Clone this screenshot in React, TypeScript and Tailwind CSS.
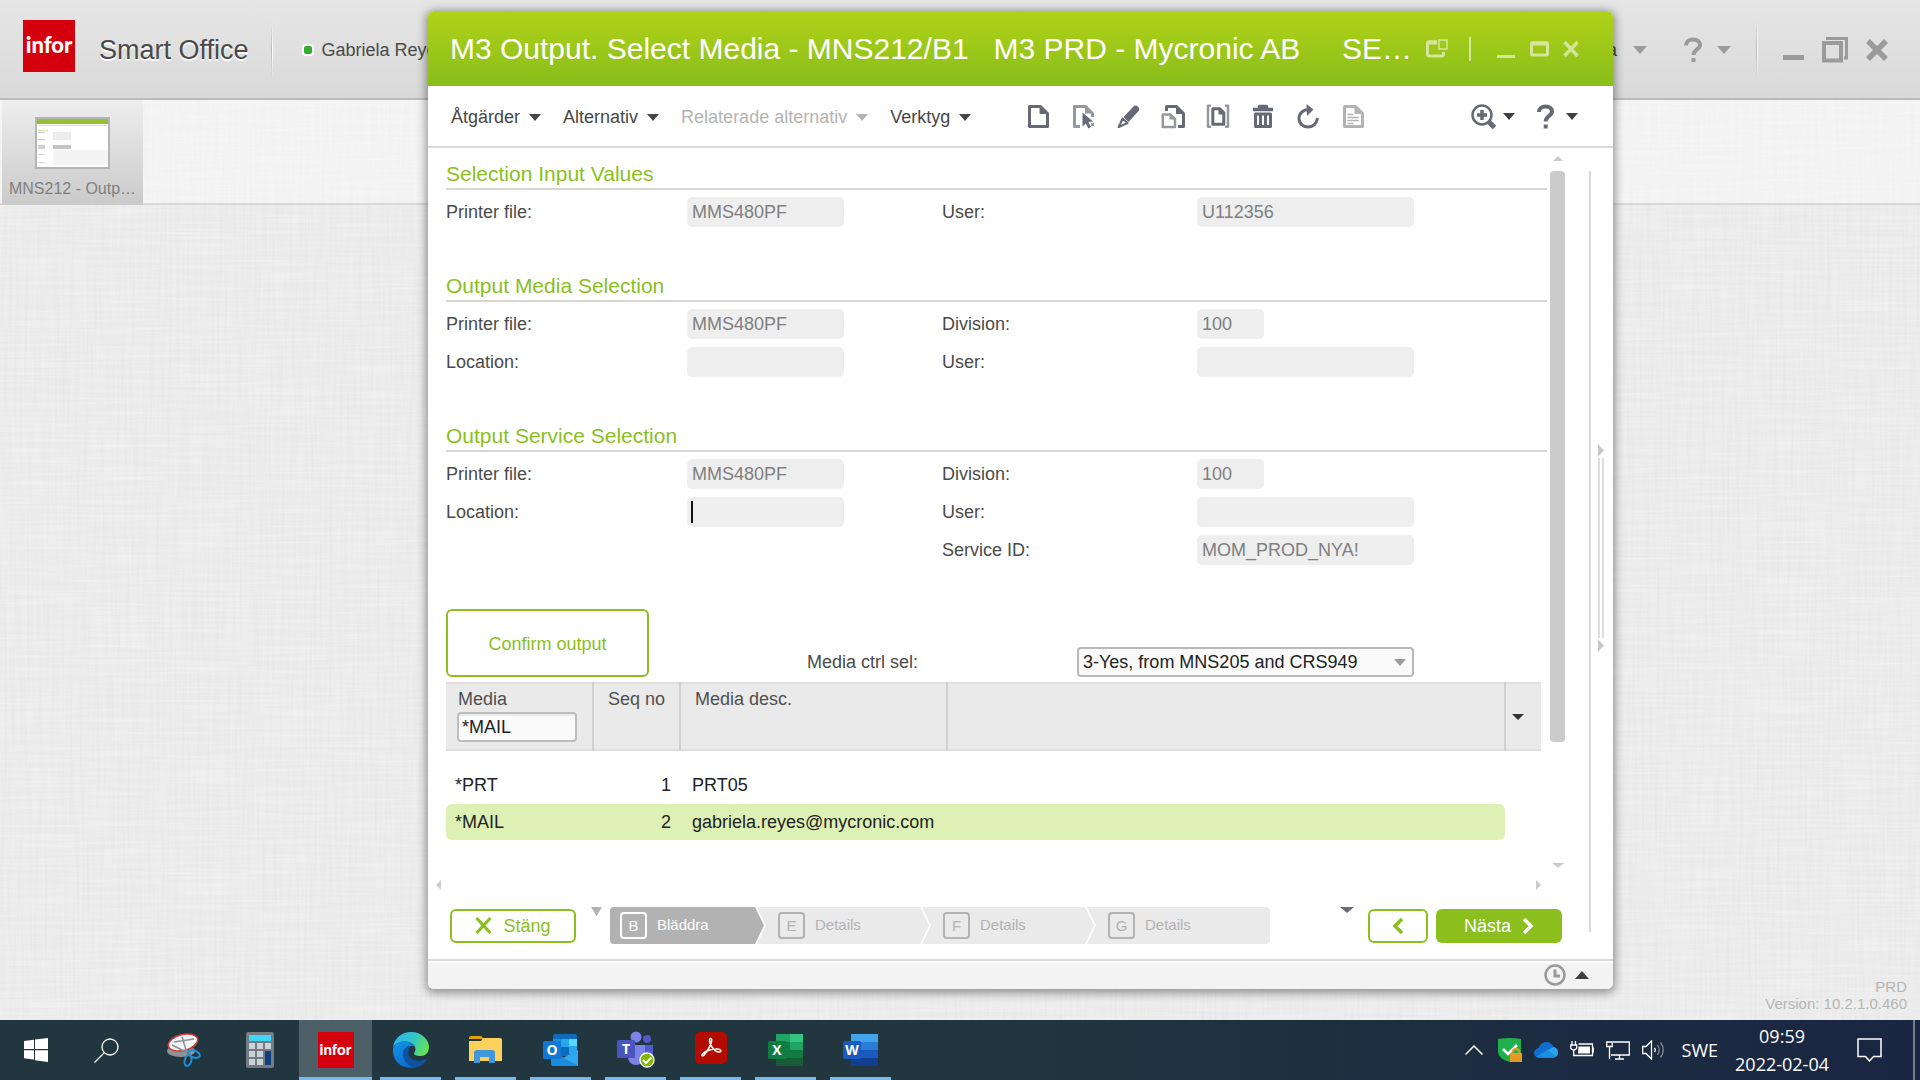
import type { ReactNode } from "react";

const toolbarMenus = [
  { label: "Åtgärder", disabled: false },
  { label: "Alternativ", disabled: false },
  { label: "Relaterade alternativ", disabled: true },
  { label: "Verktyg", disabled: false },
];

const steps = [
  { key: "B", label: "Bläddra" },
  { key: "E", label: "Details" },
  { key: "F", label: "Details" },
  { key: "G", label: "Details" },
];

const mediaRows = [
  { media: "*PRT", seq: 1, desc: "PRT05", selected: false },
  { media: "*MAIL", seq: 2, desc: "gabriela.reyes@mycronic.com", selected: true },
];

const Triangle = ({ dir = "down", className }: { dir?: "down" | "up" | "left" | "right"; className: string }) => {
  const points = {
    down: "0,0 100,0 50,100",
    up: "0,100 100,100 50,0",
    left: "100,0 100,100 0,50",
    right: "0,0 0,100 100,50",
  };
  return (
    <svg viewBox="0 0 100 100" preserveAspectRatio="none" className={`shrink-0 fill-current ${className}`}>
      <polygon points={points[dir]} />
    </svg>
  );
};

// Woven desktop background
const Linen = () => (
  <svg className="absolute inset-0 h-full w-full" aria-hidden="true">
    <filter id="warp" x="0" y="0" width="100%" height="100%">
      <feTurbulence type="fractalNoise" baseFrequency="0.4 0.012" numOctaves="2" seed="4" />
      <feColorMatrix values="0 0 0 0 0.5  0 0 0 0 0.5  0 0 0 0 0.5  0.7 0 0 0 -0.27" />
    </filter>
    <filter id="weft" x="0" y="0" width="100%" height="100%">
      <feTurbulence type="fractalNoise" baseFrequency="0.012 0.4" numOctaves="2" seed="9" />
      <feColorMatrix values="0 0 0 0 1  0 0 0 0 1  0 0 0 0 1  1.6 0 0 0 -0.6" />
    </filter>
    <rect width="100%" height="100%" filter="url(#warp)" opacity="0.3" />
    <rect width="100%" height="100%" filter="url(#weft)" opacity="0.3" />
  </svg>
);

const InforLogo = ({ className }: { className: string }) => (
  <span className={`flex items-center justify-center bg-[#d5000e] font-['Lato',sans-serif] font-black text-white ${className}`}>
    infor
  </span>
);

const HeaderDivider = () => (
  <div className="flex h-[58px]">
    <div className="w-px bg-linear-to-b from-transparent via-[#b9b9b9] to-transparent" />
    <div className="w-px bg-linear-to-b from-transparent via-white to-transparent" />
  </div>
);

const AppHeader = () => (
  <header className="relative flex h-[100px] items-center border-b-2 border-[#bbbbbb] bg-linear-to-b from-[#e6e6e6] to-[#d9d9d9] pt-0.5">
    <InforLogo className="-mt-2 ml-[23px] h-[52px] w-[52px] pb-1 text-[22px]" />
    <h1 className="ml-6 text-[27px] text-[#4a4a4a] [text-shadow:0_2px_0_#fff]">Smart Office</h1>
    <div className="ml-[22px]">
      <HeaderDivider />
    </div>
    <span className="ml-[29px] h-3 w-3 rounded-[4px] border-2 border-white bg-[#2fb02c]" />
    <span className="ml-2 text-lg text-[#4a4a4a]">Gabriela Reyes</span>
    <div className="flex-1" />
    <div className="flex items-center text-[#9b9b9b]">
      <span className="text-lg text-[#4a4a4a]">Media</span>
      <Triangle className="ml-4 h-2 w-[14px]" />
      <button aria-label="Help" className="ml-[37px] flex items-center gap-[15px]">
        <svg width="18" height="26" viewBox="0 0 18 26" fill="none" stroke="currentColor" strokeWidth="4">
          <path d="M2 8.5C2 4.500 5 2.500 9 2.500s7 2 7 5.500c0 4.500-6.500 4.500-6.500 10" />
          <path d="M9.500 21v4" />
        </svg>
        <Triangle className="h-2 w-[14px]" />
      </button>
      <div className="mr-[25px] ml-[25px]">
        <HeaderDivider />
      </div>
      <button aria-label="Minimize" className="flex h-6 w-[21px] items-end pb-0.5">
        <span className="h-[5px] w-full bg-current" />
      </button>
      <button aria-label="Restore" className="ml-[18px]">
        <svg width="26" height="26" viewBox="0 0 26 26" fill="none" stroke="currentColor">
          <rect x="2" y="6" width="17" height="17.500" strokeWidth="4" />
          <path d="M4 1.500h20.500V21H22" strokeWidth="3" />
        </svg>
      </button>
      <button aria-label="Close" className="mr-8 ml-[18px]">
        <svg width="22" height="22" viewBox="0 0 22 22" stroke="currentColor" strokeWidth="5.500">
          <path d="M2 2l18 18M20 2L2 20" />
        </svg>
      </button>
    </div>
  </header>
);

const TaskStrip = () => (
  <div className="relative flex h-[105px] border-b-2 border-[#d9d9d9] bg-white/40 pl-0.5">
    <button className="-mb-0.5 flex w-[141px] flex-col items-center bg-linear-to-b from-[#eeeeee] to-[#cacaca] pt-[17px]">
      <span className="flex h-[52px] w-[75px] flex-col border-2 border-[#b5b5b5] bg-white">
        <span className="h-[5px] bg-[#94bf35]" />
        <span className="mx-0.5 mt-px h-px bg-[#dddddd]" />
        <span className="mt-1 ml-px h-px w-2.5 bg-[#cfe5a3]" />
        <span className="mt-px ml-px flex gap-2">
          <span className="h-2 w-[7px] border-y border-[#cccccc]" />
          <span className="h-2 w-[18px] bg-[#ececec]" />
        </span>
        <span className="mt-[5px] ml-px flex gap-2">
          <span className="h-1 w-[7px] bg-[#d0d0d0]" />
          <span className="h-1 w-[18px] bg-[#c4c4c4]" />
        </span>
        <span className="mt-px ml-px flex flex-1 gap-2">
          <span className="my-1 w-[7px] border-y border-[#d5d5d5]" />
          <span className="mb-0.5 flex-1 bg-[#f4f4f4]" />
        </span>
      </span>
      <span className="mt-[10px] text-base leading-5 text-[#7f7f7f]">MNS212 - Outp…</span>
    </button>
  </div>
);

const TitleBar = () => (
  <div className="flex h-[75px] items-center rounded-t-md bg-linear-to-b from-[#b0d217] to-[#88bd1b] pr-[34px] pl-[22px]">
    <h2 className="flex-1 truncate whitespace-pre text-[30px] text-white">
      {"M3 Output. Select Media - MNS212/B1   M3 PRD - Mycronic AB     SE…"}
    </h2>
    <div className="flex items-center text-[#d3e69a]">
      <button aria-label="Detach">
        <svg width="22" height="19" viewBox="0 0 22 19" fill="none" stroke="currentColor">
          <path d="M11 3H3q-1.500 0-1.500 1.500v10.500q0 2 2 2h12q2 0 2-2v-2" strokeWidth="3" />
          <path d="M1 3.500h10" strokeWidth="4" />
          <rect x="13" y="1" width="8" height="9" strokeWidth="1.500" />
        </svg>
      </button>
      <span className="ml-[21px] h-6 w-0.5 bg-current" />
      <button aria-label="Minimize" className="ml-[26px] flex h-[18px] w-[18px] items-end">
        <span className="h-[3px] w-full bg-current" />
      </button>
      <button aria-label="Maximize" className="ml-[15px]">
        <svg width="19" height="16" viewBox="0 0 19 16" fill="none" stroke="currentColor">
          <rect x="1.500" y="2" width="16" height="12" rx="1" strokeWidth="3" />
          <path d="M1 2.500h17" strokeWidth="4" />
        </svg>
      </button>
      <button aria-label="Close" className="ml-[14px]">
        <svg width="16" height="16" viewBox="0 0 16 16" stroke="currentColor" strokeWidth="3.500">
          <path d="M1.500 1l13 14M14.500 1l-13 14" />
        </svg>
      </button>
    </div>
  </div>
);

const ToolButton = ({ label, children, pale }: { label: string; children: ReactNode; pale?: boolean }) => (
  <button aria-label={label} className={pale ? "text-[#b2b2b2]" : "text-[#676a76]"}>
    <svg width="24" height="25" viewBox="0 0 24 25" fill="none" stroke="currentColor" strokeWidth="3" strokeLinejoin="round">
      {children}
    </svg>
  </button>
);

const Toolbar = () => (
  <div className="flex h-[62px] items-center border-b-2 border-[#d9d9d9] pl-[23px]">
    <div className="flex gap-[22px] pt-0.5">
      {toolbarMenus.map(({ label, disabled }) => (
        <button
          key={label}
          disabled={disabled}
          className={`flex items-center gap-[9px] text-lg ${disabled ? "text-[#b4b4b4]" : "text-[#474747]"}`}
        >
          {label}
          <Triangle className="h-[7px] w-3" />
        </button>
      ))}
    </div>
    <div className="ml-[55px] flex gap-[21px]">
      <ToolButton label="New">
        <path d="M3.500 2.500h11l7 7v13h-18z" />
        <path d="M14 2.500v7h7z" fill="currentColor" strokeWidth="1" />
      </ToolButton>
      <ToolButton label="Select">
        <path d="M9 22.500H3.500V2.500h11l7 7v3.500M21.500 19v3" stroke="#96989f" />
        <path d="M14 2.500v7h7z" fill="#96989f" stroke="none" />
        <path d="M11.500 8.500l10.500 9-4.800.5 2.800 5-2.600 1.400-2.600-5-3.300 3z" fill="currentColor" stroke="none" />
      </ToolButton>
      <ToolButton label="Change">
        <path d="M7.500 13L17.500 2.500q2-2 4.800.5 2 2.300-.2 4.500L12.500 18z" fill="currentColor" stroke="none" />
        <path d="M6.500 14.500l5 4.500L2.800 23z" strokeWidth="2" />
        <path d="M2 23.500l1.500-3.500 2 2z" fill="currentColor" strokeWidth="1" />
      </ToolButton>
      <ToolButton label="Copy">
        <path d="M5.500 7V2.500h10l7 7v13.000H17" />
        <path d="M15 2v8h8z" fill="currentColor" stroke="none" />
        <path d="M1.800 10.500h7.200l5 4.500v8H1.800z" stroke="#96989f" strokeWidth="2.500" />
        <path d="M8.500 11v4.500h5z" fill="#96989f" stroke="none" />
      </ToolButton>
      <ToolButton label="Display">
        <path d="M5 1.800H2v21h3M19 1.800h3v21h-3" stroke="#96989f" strokeWidth="2.500" />
        <path d="M6.800 4.800h7l4 4v11.500h-11z" />
        <path d="M12.500 4.500v6h6z" fill="currentColor" stroke="none" />
      </ToolButton>
      <ToolButton label="Delete">
        <path d="M2 5.500h20M8.500 5V2.500h7V5" strokeWidth="3.500" />
        <path d="M4.500 10h15v12.500h-15zM9.500 9v13M14.500 9v13" />
      </ToolButton>
      <ToolButton label="Refresh">
        <path d="M13 5.500c-6 0-10 4-10 9 0 5 4 8.500 9 8.500s9-3.500 9.500-9" />
        <path d="M10.500 0l7 5.500-6.500 6.500z" fill="currentColor" stroke="none" />
      </ToolButton>
      <ToolButton label="Document" pale>
        <path d="M3.500 2.500h11l7 7v13h-18z" />
        <path d="M14 2.500v7h7z" fill="currentColor" strokeWidth="1" />
        <path d="M6.500 10.500h6M6.500 13.500h11M6.500 16.500h11M6.500 19.500h6" strokeWidth="1.500" />
      </ToolButton>
    </div>
    <div className="flex-1" />
    <button aria-label="Zoom" className="flex items-center gap-[7px] text-[#676a76]">
      <svg width="25" height="25" viewBox="0 0 25 25" fill="none" stroke="currentColor">
        <circle cx="11" cy="11" r="9.500" strokeWidth="2.500" />
        <path d="M11 6v10M6 11h10" strokeWidth="3.500" />
        <path d="M17.500 17.500l6 6" strokeWidth="5" />
      </svg>
      <Triangle className="h-[7px] w-3 text-[#3f3f3f]" />
    </button>
    <button aria-label="Help" className="mr-[35px] ml-[22px] flex items-center gap-3 text-[#676a76]">
      <svg width="17" height="25" viewBox="0 0 17 25" fill="none" stroke="currentColor" strokeWidth="4">
        <path d="M2 8C2 4.500 4.500 2.500 8.500 2.500s6.500 2 6.500 5c0 4.500-6.300 4.500-6.300 10" />
        <path d="M8.700 20.500v4" />
      </svg>
      <Triangle className="h-[7px] w-3 text-[#3f3f3f]" />
    </button>
  </div>
);

const Field = ({
  id,
  label,
  value = "",
  width,
  caret,
  className = "",
}: {
  id: string;
  label: string;
  value?: string;
  width: string;
  caret?: boolean;
  className?: string;
}) => (
  <>
    <label htmlFor={id} className={`text-lg leading-[30px] text-[#4a4a4a] ${className}`}>
      {label}
    </label>
    <div className="relative">
      <input
        id={id}
        readOnly
        defaultValue={value}
        className={`block h-[30px] rounded-[5px] bg-[#eeeeee] px-[5px] text-lg text-[#7f7f7f] outline-none ${width}`}
      />
      {caret && <span className="absolute top-1 left-1 h-[22px] w-0.5 bg-[#111111]" />}
    </div>
  </>
);

const Section = ({ title, children }: { title: string; children: ReactNode }) => (
  <section>
    <h3 className="border-b-2 border-[#d6d6d6] pt-px pb-0.5 text-[21px] leading-6 text-[#8abf1e]">{title}</h3>
    <div className="mt-[7px] grid grid-cols-[241px_255px_255px_1fr] gap-y-2">{children}</div>
  </section>
);

const MediaTable = () => (
  <table className="mt-[5px] w-[calc(100%-6px)] table-fixed border-collapse text-lg">
    <colgroup>
      <col className="w-[147px]" />
      <col className="w-[87px]" />
      <col className="w-[267px]" />
      <col />
      <col className="w-[36px]" />
    </colgroup>
    <thead>
      <tr className="h-[67px] border-y-2 border-[#dfdfdf] bg-[#eaeaea] text-left align-top text-[#4f4f4f]">
        <th className="border-r-2 border-[#d0d0d0] pt-1 pl-[11px] font-normal">
          <label htmlFor="media-filter" className="block pl-px leading-[22px]">
            Media
          </label>
          <input
            id="media-filter"
            defaultValue="*MAIL"
            className="mt-0.5 block h-[30px] w-[120px] rounded-[4px] border-2 border-[#bdbdbd] bg-[#fafafa] px-[3px] text-[#222222] shadow-[inset_0_2px_0_#e9e9e9]"
          />
        </th>
        <th className="border-r-2 border-[#d0d0d0] pt-1 pl-[14px] leading-[22px] font-normal">Seq no</th>
        <th className="border-r-2 border-[#d0d0d0] pt-1 pl-[14px] leading-[22px] font-normal">Media desc.</th>
        <th className="border-r-2 border-[#d0d0d0]" />
        <th className="align-middle">
          <button aria-label="Columns" className="flex pl-1.5 text-[#333333]">
            <Triangle className="h-1.5 w-3" />
          </button>
        </th>
      </tr>
    </thead>
    <tbody className="text-[#222222] before:block before:h-[15px]">
      {mediaRows.map(({ media, seq, desc, selected }) => {
        const bg = selected ? "bg-[#def1b5]" : "";
        return (
          <tr key={seq} className={selected ? "h-9" : "h-[38px]"}>
            <td className={`rounded-l-md pl-[9px] ${bg}`}>{media}</td>
            <td className={`pr-[9px] text-right ${bg}`}>{seq}</td>
            <td className={`pl-3 ${bg}`}>{desc}</td>
            <td className={`rounded-r-md ${bg}`} />
            <td />
          </tr>
        );
      })}
    </tbody>
  </table>
);

const FormPanel = () => (
  <div className="flex-1 pt-[13px] pl-[18px]">
    <div className="flex flex-col gap-[46px]">
      <Section title="Selection Input Values">
        <Field id="in-printer" label="Printer file:" value="MMS480PF" width="w-[157px]" />
        <Field id="in-user" label="User:" value="U112356" width="w-[217px]" />
      </Section>
      <Section title="Output Media Selection">
        <Field id="media-printer" label="Printer file:" value="MMS480PF" width="w-[157px]" />
        <Field id="media-division" label="Division:" value="100" width="w-[67px]" />
        <Field id="media-location" label="Location:" width="w-[157px]" />
        <Field id="media-user" label="User:" width="w-[217px]" />
      </Section>
      <Section title="Output Service Selection">
        <Field id="service-printer" label="Printer file:" value="MMS480PF" width="w-[157px]" />
        <Field id="service-division" label="Division:" value="100" width="w-[67px]" />
        <Field id="service-location" label="Location:" width="w-[157px]" caret />
        <Field id="service-user" label="User:" width="w-[217px]" />
        <Field id="service-id" label="Service ID:" value="MOM_PROD_NYA!" width="w-[217px]" className="col-start-3" />
      </Section>
    </div>
    <div className="mt-11 flex items-end">
      <button className="h-[68px] w-[203px] rounded-md border-2 border-[#8abf1e] pt-0.5 text-lg text-[#8abf1e]">Confirm output</button>
      <label htmlFor="media-ctrl" className="ml-[158px] w-[270px] text-lg leading-[30px] text-[#4a4a4a]">
        Media ctrl sel:
      </label>
      <div className="relative">
        <select
          id="media-ctrl"
          className="block h-[30px] w-[337px] appearance-none rounded-[4px] border-2 border-[#b9b9b9] bg-[#fafafa] pl-1 text-lg leading-6 text-[#222222]"
        >
          <option>3-Yes, from MNS205 and CRS949</option>
        </select>
        <Triangle className="pointer-events-none absolute top-3 right-2 h-[7px] w-3 text-[#9b9b9b]" />
      </div>
    </div>
    <MediaTable />
  </div>
);

const Steps = () => (
  <ol className="ml-2 flex h-[37px]">
    {steps.map(({ key, label }, i) => {
      const first = i === 0;
      const last = i === steps.length - 1;
      const shape = first
        ? "w-[154px] rounded-l bg-[#b2b2b2] pl-[10px] text-white [clip-path:polygon(0_0,145px_0,100%_50%,145px_100%,0_100%)]"
        : last
          ? "-ml-[7px] w-[183px] rounded-r bg-[#eaeaea] pl-[21px] text-[#b2b2b2] [clip-path:polygon(0_0,100%_0,100%_100%,0_100%,9px_50%)]"
          : "-ml-[7px] w-[172px] bg-[#eaeaea] pl-[21px] text-[#b2b2b2] [clip-path:polygon(0_0,163px_0,100%_50%,163px_100%,0_100%,9px_50%)]";
      return (
        <li key={key} className={`flex items-center ${shape}`}>
          <button className="flex items-center gap-[10px] text-[15px]">
            <span className="flex h-[27px] w-[27px] items-center justify-center rounded border-2 border-current leading-5">{key}</span>
            {label}
          </button>
        </li>
      );
    })}
  </ol>
);

const ActionBar = () => (
  <div className="mt-[17px] flex items-center pl-[22px]">
    <button className="flex h-[34px] w-[126px] items-center justify-center gap-[11px] rounded-md border-2 border-[#8abf1e] text-lg text-[#8abf1e]">
      <svg width="17" height="17" viewBox="0 0 17 17" stroke="currentColor" strokeWidth="3">
        <path d="M1.500 1l14 15M15.500 1l-14 15" />
      </svg>
      Stäng
    </button>
    <Triangle className="ml-[15px] h-[9px] w-[11px] self-start text-[#b2b2b2]" />
    <Steps />
    <div className="flex-1" />
    <Triangle className="h-1.5 w-[14px] self-start text-[#676a76]" />
    <button
      aria-label="Previous"
      className="ml-[14px] flex h-[34px] w-[60px] items-center justify-center rounded-md border-2 border-[#8abf1e] text-[#8abf1e]"
    >
      <svg width="12" height="16" viewBox="0 0 12 16" fill="none" stroke="currentColor" strokeWidth="3.500">
        <path d="M10 1L3 8l7 7" />
      </svg>
    </button>
    <button className="mr-[3px] ml-2 flex h-[34px] w-[126px] items-center justify-center gap-[11px] rounded-md bg-[#8abf1e] text-lg text-white">
      Nästa
      <svg width="12" height="16" viewBox="0 0 12 16" fill="none" stroke="currentColor" strokeWidth="3.500">
        <path d="M2 1l7 7-7 7" />
      </svg>
    </button>
  </div>
);

const M3Window = () => (
  <div className="absolute top-[11px] right-[307px] left-[428px] rounded-md bg-white shadow-[0_2px_10px_2px_rgba(0,0,0,0.4)]">
    <TitleBar />
    <Toolbar />
    <div className="flex pr-[9px] pb-[15px]">
      <div className="flex-1">
        <div className="flex h-[720px]">
          <FormPanel />
          <div className="ml-[3px] flex w-[15px] flex-col items-center pt-2 text-[#cbcbcb]">
            <Triangle dir="up" className="h-[5px] w-2.5" />
            <div className="mt-[10px] h-[571px] w-full rounded bg-[#cbcbcb]" />
            <div className="flex-1" />
            <Triangle className="h-[5px] w-3" />
          </div>
        </div>
        <div className="mt-3 flex justify-between pr-[24px] pl-2 text-[#cbcbcb]">
          <Triangle dir="left" className="h-2.5 w-[5px]" />
          <Triangle dir="right" className="h-2.5 w-[5px]" />
        </div>
        <ActionBar />
      </div>
      <div className="mt-[23px] mb-3 ml-6 w-0.5 bg-[#d9d9d9]" />
      <div className="ml-[7px] flex w-1.5 flex-col justify-center pt-1 text-[#c9c9c9]">
        <Triangle dir="right" className="h-[13px] w-1.5" />
        <div className="my-px h-[180px] border-x-2 border-[#dddddd]" />
        <Triangle dir="right" className="h-[13px] w-1.5" />
      </div>
    </div>
    <div className="flex h-[30px] items-center rounded-b-md border-t-2 border-[#d9d9d9] bg-[#f3f3f3] pr-6 shadow-[inset_0_2px_0_#fff]">
      <div className="flex-1" />
      <svg width="22" height="22" viewBox="0 0 22 22" fill="none" stroke="#999999" strokeWidth="2.500">
        <circle cx="11" cy="11" r="9.500" />
        <path d="M11 5.500V12h5" strokeWidth="3" />
      </svg>
      <Triangle dir="up" className="ml-[9px] h-2 w-[14px] text-[#3f3f3f]" />
    </div>
  </div>
);

const TaskItem = ({ label, active, running, children }: { label: string; active?: boolean; running?: boolean; children: ReactNode }) => (
  <button
    aria-label={label}
    className={`relative flex h-[60px] items-center justify-center ${active ? "mx-px w-[73px] bg-[#4d5f67]" : "mx-[7px] w-[61px]"}`}
  >
    {children}
    {(active || running) && <span className="absolute inset-x-0 bottom-0 h-[3px] bg-[#76b9ed]" />}
  </button>
);

const OfficeBadge = ({ letter, color }: { letter: string; color: string }) => (
  <>
    <rect x="0" y="8" width="18" height="18" rx="1.500" fill={color} />
    <text x="9" y="22" textAnchor="middle" fontSize="14" fontWeight="bold" fill="#fff" fontFamily="Open Sans, sans-serif">
      {letter}
    </text>
  </>
);

const Taskbar = () => (
  <footer className="relative flex h-[60px] items-center bg-linear-to-r from-[#21363f] via-[#21363f] to-[#1a2542] text-white">
    <nav className="-ml-0.5 flex">
      <TaskItem label="Start">
        <svg width="24" height="24" viewBox="0 0 24 24" fill="#fff">
          <path d="M0 3l10-1.300V11H0zM11 1.600L24 0v11H11zM0 12.200h10v9.200L0 20.300zM11 12.200h13V24l-13-1.700z" />
        </svg>
      </TaskItem>
      <TaskItem label="Search">
        <svg width="25" height="25" viewBox="0 0 25 25" fill="none" stroke="#fff" strokeWidth="1.300" className="-ml-2">
          <circle cx="16" cy="9" r="8" />
          <path d="M10.500 14.500L.5 24.500" />
        </svg>
      </TaskItem>
      <TaskItem label="Snipping Tool">
        <svg width="34" height="34" viewBox="0 0 34 34" fill="none" className="-ml-1">
          <ellipse cx="14" cy="18" rx="14" ry="6" fill="#8d9397" />
          <ellipse cx="16" cy="9.500" rx="15" ry="8" transform="rotate(-14 16 9.500)" fill="#f4f6f7" stroke="#d93a36" strokeWidth="1.500" />
          <path d="M15 4l5 16M5 12l16 8M7 9l20-3" stroke="#8a9196" strokeWidth="1.500" />
          <ellipse cx="27" cy="21" rx="6" ry="3.500" transform="rotate(20 27 21)" stroke="#2090d8" strokeWidth="2" />
          <ellipse cx="21" cy="27.500" rx="3.300" ry="5.500" transform="rotate(15 21 27.500)" stroke="#2090d8" strokeWidth="2" />
        </svg>
      </TaskItem>
      <TaskItem label="Calculator">
        <svg width="28" height="36" viewBox="0 0 28 36" className="-ml-0.5">
          <rect width="28" height="36" rx="2" fill="#737b83" />
          <rect x="3" y="3" width="22" height="6" fill="#40d5fa" />
          <path d="M3 11h6v6H3zM11 11h6v6h-6zM19 11h6v6h-6zM3 19h6v6H3zM11 19h6v6h-6zM3 27h6v6H3zM11 27h6v6h-6z" fill="#ccd2d9" />
          <rect x="19" y="19" width="6" height="14" fill="#103f7c" />
        </svg>
      </TaskItem>
      <TaskItem label="Infor Smart Office" active>
        <InforLogo className="h-9 w-9 pb-0.5 text-[15px]" />
      </TaskItem>
      <TaskItem label="Edge" running>
        <svg width="36" height="36" viewBox="0 0 36 36">
          <defs>
            <linearGradient id="edge-top" x1="0" x2="1" y1="0.200" y2="0.500">
              <stop offset="0" stopColor="#2fb4f3" />
              <stop offset="0.550" stopColor="#31c7c7" />
              <stop offset="1" stopColor="#66e056" />
            </linearGradient>
            <linearGradient id="edge-side" x1="0" x2="0.600" y1="0" y2="1">
              <stop offset="0" stopColor="#1494e4" />
              <stop offset="1" stopColor="#0a6cd0" />
            </linearGradient>
          </defs>
          <path d="M0 16C1 6 9 0 18 0c11 0 18 8 18 15 0 6-4 9-8.500 9-4 0-6.500-1-6.500-2.500 0-1 1.500-1.800 1.500-4.500 0-4-5-7.500-10.500-7.500C6 9.500 1.500 12 0 16z" fill="url(#edge-top)" />
          <path d="M0 17c1-5 6-7.500 11-7.500 5 0 9 2 10.500 4.500-5-1-9 3-9 8 0 7 5 12 11 13C9 38.500-1 29 0 17z" fill="url(#edge-side)" />
          <path d="M14 14.500c-4 3-5 8-3 12.500 3 7 9.500 9 13.500 8 4-1.200 7-4 9-7 .6-1-.3-1.500-1-1-8 4-17 1-17-7 0-2 .5-4 2-5.500-1.500-.7-2.500-.5-3.500 0z" fill="#0f51a1" />
        </svg>
      </TaskItem>
      <TaskItem label="File Explorer" running>
        <svg width="33" height="28" viewBox="0 0 33 28">
          <path d="M0 2q0-2 2-2h10l3 3H0z" fill="#e3a004" />
          <path d="M0 5h12l2-3h17q2 0 2 2v21H0z" fill="#ffd05a" />
          <path d="M5 27V17q0-3 3-3h15q3 0 3 3v10h-6v-6h-9v6z" fill="#3f97dd" />
        </svg>
      </TaskItem>
      <TaskItem label="Outlook" running>
        <svg width="36" height="34" viewBox="0 0 36 34">
          <rect x="10" y="1" width="24" height="22" rx="1.500" fill="#0f6cbd" />
          <path d="M10 6h8v8h-8z" fill="#1b8fe0" />
          <path d="M18 6h8v8h-8z" fill="#28a8ea" />
          <path d="M26 6h8v7h-8z" fill="#55d7ff" />
          <path d="M26 13h8v8h-8z" fill="#28a8ea" />
          <path d="M8 17l27 16H10q-2 0-2-2z" fill="#1b8be0" />
          <path d="M35 17v16L20 25z" fill="#31a9ee" />
          <OfficeBadge letter="O" color="#0f78d4" />
        </svg>
      </TaskItem>
      <TaskItem label="Teams" running>
        <svg width="38" height="38" viewBox="0 -1 38 38">
          <circle cx="19" cy="5" r="5.500" fill="#7b83eb" />
          <circle cx="30" cy="7" r="4" fill="#5059c9" />
          <path d="M26 13h10v10q0 6-6 7l-4-1z" fill="#5059c9" />
          <path d="M11 13h17v11c0 5-4 9-9 9s-8-4-8-8z" fill="#7b83eb" />
          <OfficeBadge letter="T" color="#4b53bc" />
          <circle cx="30" cy="28" r="7" fill="#7eb900" stroke="#fff" strokeWidth="1.300" />
          <path d="M26 28l3 3 5.500-5.500" fill="none" stroke="#fff" strokeWidth="2" />
        </svg>
      </TaskItem>
      <TaskItem label="Acrobat" running>
        <svg width="32" height="32" viewBox="0 0 32 32" className="-mt-1">
          <rect width="32" height="32" rx="5" fill="#b30b00" />
          <path
            d="M15.500 6.500c-1.500 0-1.500 4 1.500 8.500 2.500 3.500 6 5.500 8 4.800 2-.8.500-3-4-2.800-4.500 0-9 1.500-12.500 4-3 2.500-1 4 1 1.500 2.500-3 6-9 7-13 .5-2 0-3-1-3z"
            fill="none"
            stroke="#fff"
            strokeWidth="1.600"
          />
        </svg>
      </TaskItem>
      <TaskItem label="Excel" running>
        <svg width="36" height="34" viewBox="0 0 36 34">
          <path d="M8 1h14v8H8z" fill="#21a366" />
          <path d="M22 1h13v8H22z" fill="#33c481" />
          <path d="M8 9h14v8H8z" fill="#128045" />
          <path d="M22 9h13v8H22z" fill="#21a366" />
          <path d="M8 17h27v8H8z" fill="#107c41" />
          <path d="M8 25h27v8H8z" fill="#185c37" />
          <OfficeBadge letter="X" color="#107c41" />
        </svg>
      </TaskItem>
      <TaskItem label="Word" running>
        <svg width="36" height="34" viewBox="0 0 36 34">
          <path d="M8 1h27v8H8z" fill="#41a5ee" />
          <path d="M8 9h27v8H8z" fill="#2b7cd3" />
          <path d="M8 17h27v8H8z" fill="#185abd" />
          <path d="M8 25h27v8H8z" fill="#103f91" />
          <OfficeBadge letter="W" color="#185abd" />
        </svg>
      </TaskItem>
    </nav>
    <div className="flex-1" />
    <div className="flex items-center font-['Open_Sans','Noto_Sans',sans-serif] text-lg">
      <svg width="18" height="10" viewBox="0 0 18 10" fill="none" stroke="#fff" strokeWidth="1.500">
        <path d="M.5 9.500L9 1l8.500 8.500" />
      </svg>
      <svg width="24" height="24" viewBox="0 0 24 24" className="ml-[15px]">
        <path d="M0 1q12-2 23 0v12q0 8-11.500 11Q0 21 0 13z" fill="#1faf4b" />
        <path d="M5 11l5 5 9-9" fill="none" stroke="#fff" strokeWidth="2.500" />
        <rect x="12" y="15" width="12" height="9" fill="#e59a23" />
        <path d="M14.500 16v-1.500a3.500 3.500 0 017 0V16" fill="none" stroke="#e59a23" strokeWidth="2" />
      </svg>
      <svg width="24" height="16" viewBox="0 0 24 16" className="ml-3">
        <path d="M5 15.500C1.500 15.500 0 13 0 11s1.500-4.500 4.500-5C6 2 9 0 12.500 0 16 0 18.500 2 19.500 5c3 .5 4.500 3 4.500 5.500s-1.500 5-5 5z" fill="#0f6fd0" />
        <path d="M5 15.500L12 9l7.500-4C22.500 5.500 24 8 24 10.500s-1.500 5-5 5z" fill="#2ba3ec" />
        <path d="M2 14.500L14 8l8 6.500q-1 1-3 1H5q-2 0-3-1z" fill="#1a8ee2" />
      </svg>
      <svg width="24" height="18" viewBox="0 0 24 18" className="ml-3" fill="none" stroke="#fff" strokeWidth="1.300">
        <path d="M2 0v4M5.500 0v4M.700 4h6v2.500q0 2-3 2.500-3-.5-3-2.500zM3.700 9v5.500H6M8.500 3h14v11.500H6" />
        <path d="M8.500 5.500h11.500v7H8z" fill="#fff" stroke="none" />
        <path d="M23.500 6.500v5" />
      </svg>
      <svg width="24" height="19" viewBox="0 0 24 19" className="ml-3" fill="none" stroke="#fff" strokeWidth="1.300">
        <path d="M7 1h16.300v13.000H5M9 18h9M13.500 14v4M.7 1h5.500v4.500H.7zM3.500 5.500V18" />
      </svg>
      <svg width="24" height="20" viewBox="0 0 24 20" className="ml-3" fill="none" stroke="#fff" strokeWidth="1.300">
        <path d="M.7 6.500H4L9.500 1v18L4 13.500H.7zM12.500 8q1.500 2 0 4" />
        <path d="M15.500 5q3.500 5 0 10M18.500 2.500q5.500 7.500 0 15" opacity=".45" />
      </svg>
      <span className="ml-4">SWE</span>
      <time className="ml-[17px] flex flex-col items-center leading-7">
        <span>09:59</span>
        <span>2022-02-04</span>
      </time>
      <button aria-label="Notifications" className="mr-[31px] ml-7">
        <svg width="25" height="24" viewBox="0 0 25 24" fill="none" stroke="#fff" strokeWidth="1.500">
          <path d="M1 1h23v17.500h-7.500L12.500 23l-4-4.500H1z" />
        </svg>
      </button>
      <span className="mr-[5px] h-[60px] w-0.5 bg-[#767d8a]" />
    </div>
  </footer>
);

export default function App() {
  return (
    <div className="relative flex min-h-screen flex-col overflow-hidden bg-[#ececec] font-['Liberation_Sans',Arial,sans-serif]">
      <Linen />
      <AppHeader />
      <TaskStrip />
      <div className="relative flex flex-1 flex-col justify-end pr-[13px] pb-2 text-right text-[15px] leading-[17px] text-[#b5b5b5]">
        <p>PRD</p>
        <p>Version: 10.2.1.0.460</p>
      </div>
      <Taskbar />
      <M3Window />
    </div>
  );
}
